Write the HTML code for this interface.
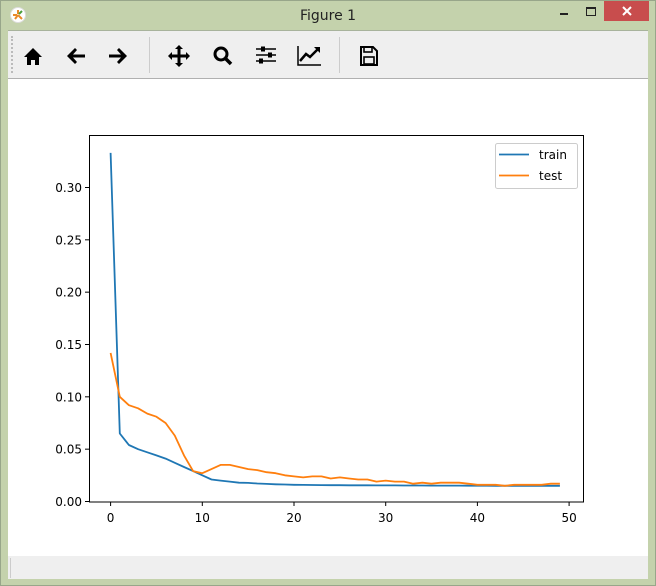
<!DOCTYPE html>
<html><head><meta charset="utf-8"><style>
html,body{margin:0;padding:0;width:656px;height:586px;overflow:hidden;background:#c4d2ac;font-family:"Liberation Sans","DejaVu Sans",sans-serif}
.win{position:absolute;left:0;top:0;width:654px;height:584px;border:1px solid #98a68a;background:#c4d2ac}
.title{position:absolute;left:0;top:0;width:656px;height:30px;text-align:center;line-height:32px;font-size:14px;color:#222;font-family:"DejaVu Sans",sans-serif}
.client{position:absolute;left:8px;top:30px;width:640px;height:548px;background:#fff;border-top:1px solid #a8b39c}
.tb{position:absolute;left:0;top:0;width:640px;height:47px;background:#efefef;border-bottom:1px solid #b0b0b0}
.sb{position:absolute;left:0;top:525px;width:640px;height:23px;background:#efefef}
.close{position:absolute;left:604px;top:1px;width:45px;height:20px;background:#c84d4d}
</style></head><body>
<div class="win"></div>
<div class="title">Figure 1</div>
<svg style="position:absolute;left:10px;top:7px" width="16" height="16" viewBox="0 0 16 16"><circle cx="8" cy="8" r="7.5" fill="#fff" stroke="#ddd"/><path d="M3 8h4M8 3v4M8 8l4 4M8 8l-3 4" stroke="#e98a2a" stroke-width="2"/><path d="M9 7l3-3" stroke="#4a9d3a" stroke-width="2"/></svg>
<div style="position:absolute;left:560px;top:13px;width:8px;height:2px;background:#222"></div>
<div style="position:absolute;left:586px;top:7px;width:8px;height:6px;border:1px solid #222;border-top-width:2px"></div>
<div class="close"></div>
<svg style="position:absolute;left:622px;top:6px" width="10" height="10"><path d="M1 1l8 8M9 1l-8 8" stroke="#fff" stroke-width="2"/></svg>
<div class="client">
<div class="tb">
<div style="position:absolute;left:3px;top:5px;width:1px;height:37px;border-left:2px dotted #bbb"></div>
<div style="position:absolute;left:141px;top:6px;width:1px;height:36px;background:#ccc"></div>
<div style="position:absolute;left:331px;top:6px;width:1px;height:36px;background:#ccc"></div>
<svg width="640" height="47" style="position:absolute;left:0;top:0">
<path d="M16 26l9-9 9 9h-3v8h-4v-5h-4v5h-4v-8z" fill="#000"/>
<path d="M59 25l8-8 2 2-4 4.5h12v3h-12l4 4.5-2 2z" fill="#000"/>
<path d="M119 25l-8-8-2 2 4 4.5h-12v3h12l-4 4.5 2 2z" fill="#000"/>
<path d="M171 14l4 4h-2.5v5.5h5.5v-2.5l4 4-4 4v-2.5h-5.5v5.5h2.5l-4 4-4-4h2.5v-5.5h-5.5v2.5l-4-4 4-4v2.5h5.5v-5.5h-2.5z" fill="#000"/>
<circle cx="213" cy="23" r="6" fill="none" stroke="#000" stroke-width="3"/><path d="M217 27l6 6" stroke="#000" stroke-width="3.5"/>
<path d="M248 18h20M248 24h20M248 30h20" stroke="#000" stroke-width="1.6"/><rect x="253" y="15.5" width="4" height="5" fill="#000"/><rect x="260" y="21.5" width="4" height="5" fill="#000"/><rect x="251" y="27.5" width="4" height="5" fill="#000"/>
<path d="M290 15v19h23" stroke="#000" stroke-width="1.5" fill="none"/><path d="M292 30l6-7 4 3 8-8" stroke="#000" stroke-width="2.5" fill="none"/><path d="M306 16h6v6z" fill="#000"/>
<path d="M353 16h12l4 4v14h-16z" fill="none" stroke="#000" stroke-width="2"/><rect x="356" y="16" width="8" height="5" fill="none" stroke="#000" stroke-width="1.6"/><rect x="356" y="26" width="10" height="7" fill="none" stroke="#000" stroke-width="1.6"/>
</svg>
</div>
<div class="sb"><div style="position:absolute;left:2px;top:2px;width:1px;height:20px;background:#ccc"></div></div>
</div>
<svg id="plot" width="656" height="586" style="position:absolute;left:0;top:0" font-family="DejaVu Sans, Liberation Sans, sans-serif" font-size="12"></svg>
<script>
var s=document.getElementById('plot'),h='';
function X(v){return 110.6+v*9.17}function Y(v){return 501.5-v*1046.7}
h+='<rect x="89.5" y="135.5" width="494" height="366.5" fill="none" stroke="#000" stroke-width="1"/>';
for(var i=0;i<=6;i++){var v=i*0.05,y=Y(v);h+='<line x1="85" x2="89" y1="'+y+'" y2="'+y+'" stroke="#000"/><text x="82" y="'+(y+4.5)+'" text-anchor="end">'+v.toFixed(2)+'</text>';}
for(var i=0;i<=5;i++){var x=X(i*10);h+='<line x1="'+x+'" x2="'+x+'" y1="502" y2="506" stroke="#000"/><text x="'+x+'" y="522" text-anchor="middle">'+(i*10)+'</text>';}
var tr=[.333,.065,.054,.05,.047,.044,.041,.037,.033,.029,.025,.021,.02,.019,.018,.0178,.0172,.0168,.0164,.0162,.016,.0159,.0158,.0157,.0156,.0156,.0155,.0155,.0155,.0154,.0154,.0154,.0153,.0153,.0153,.0152,.0152,.0152,.0152,.0151,.0151,.0151,.015,.015,.015,.015,.0149,.0149,.015,.015];
var te=[.142,.1,.092,.089,.084,.081,.075,.063,.044,.029,.027,.031,.035,.035,.033,.031,.03,.028,.027,.025,.024,.023,.024,.024,.022,.023,.022,.021,.021,.019,.02,.019,.019,.017,.018,.017,.018,.018,.018,.017,.016,.016,.016,.015,.016,.016,.016,.016,.017,.017];
function pl(a,c){var p=a.map(function(v,i){return X(i).toFixed(1)+','+Y(v).toFixed(1)}).join(' ');return '<polyline points="'+p+'" fill="none" stroke="'+c+'" stroke-width="1.8" stroke-linejoin="round"/>';}
h+=pl(tr,'#1f77b4')+pl(te,'#ff7f0e');
h+='<rect x="495.5" y="143.5" width="82" height="45" rx="2" fill="#fff" fill-opacity="0.8" stroke="#ccc"/>';
h+='<line x1="499" x2="529" y1="154.5" y2="154.5" stroke="#1f77b4" stroke-width="1.8"/><text x="539" y="159">train</text>';
h+='<line x1="499" x2="529" y1="175.5" y2="175.5" stroke="#ff7f0e" stroke-width="1.8"/><text x="539" y="180">test</text>';
s.innerHTML=h;
</script>
</body></html>
